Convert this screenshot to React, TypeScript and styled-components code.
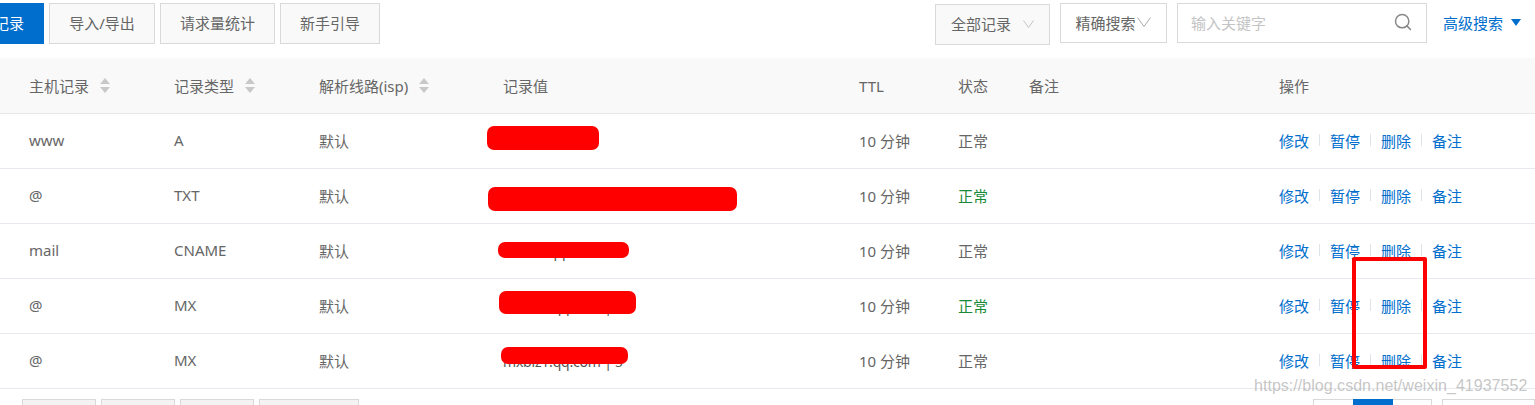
import React from "react";
import styled, { createGlobalStyle } from "styled-components";
import { Search } from "lucide-react";

const GlobalStyle = createGlobalStyle`
  html, body { margin: 0; padding: 0; background: #fff; overflow: hidden; }
  body {
    font-family: "Noto Sans", "Noto Sans CJK SC", sans-serif;
    font-size: 15px;
    color: #555;
  }
`;

const Page = styled.div`
  position: relative;
  width: 1535px;
  height: 405px;
  overflow: hidden;
`;

const Toolbar = styled.div`
  display: flex;
  align-items: flex-start;
  height: 58px;
  padding-top: 3px;
  box-sizing: border-box;
`;

const ToolButton = styled.button<{ $w: number; $primary?: boolean }>`
  width: ${(p) => p.$w}px;
  height: 41px;
  margin-right: 5px;
  padding: 0 0 3px;
  box-sizing: border-box;
  flex: none;
  border: 1px solid ${(p) => (p.$primary ? "#006ecc" : "#d9d9d9")};
  background: ${(p) => (p.$primary ? "#006ecc" : "#f9f9f9")};
  color: ${(p) => (p.$primary ? "#fff" : "#666")};
  font: inherit;
  white-space: nowrap;
`;

const PrimaryButton = styled(ToolButton)`
  margin-left: -37px;
  text-align: right;
  padding-right: 19px;
`;

const Spacer = styled.div`
  flex: 1;
`;

const FilterSelect = styled.div<{ $w: number; $fill?: boolean; $gap: number }>`
  display: flex;
  align-items: center;
  justify-content: center;
  gap: ${(p) => p.$gap}px;
  width: ${(p) => p.$w}px;
  height: ${(p) => (p.$fill ? 41 : 40)}px;
  margin-top: ${(p) => (p.$fill ? 1 : 0)}px;
  margin-right: 10px;
  padding-bottom: 2px;
  box-sizing: border-box;
  border: 1px solid #d9d9d9;
  background: ${(p) => (p.$fill ? "#f9f9f9" : "#fff")};
  color: #666;
`;

const Chevron = ({ w, h, color }: { w: number; h: number; color: string }) => (
  <svg width={w} height={h} viewBox={`0 0 ${w} ${h}`} fill="none">
    <path d={`M0.5 0.5 L${w / 2} ${h - 0.5} L${w - 0.5} 0.5`} stroke={color} strokeWidth="1" />
  </svg>
);

const SearchBox = styled.div`
  display: flex;
  align-items: center;
  justify-content: space-between;
  width: 250px;
  height: 40px;
  padding: 0 13px 2px 13px;
  box-sizing: border-box;
  border: 1px solid #d9d9d9;
  color: #c4c4c4;
  svg { color: #888; }
`;

const AdvancedLink = styled.a`
  display: flex;
  align-items: center;
  height: 40px;
  padding-bottom: 2px;
  box-sizing: border-box;
  margin-left: 16px;
  margin-right: 14px;
  color: #006ecc;
  white-space: nowrap;
`;

const Caret = styled.span`
  width: 0;
  height: 0;
  margin-left: 8px;
  border-left: 5.5px solid transparent;
  border-right: 5.5px solid transparent;
  border-top: 7px solid #006ecc;
`;

const columns = "145px 145px 184px 356px 99px 71px 250px 1fr";

const HeaderRow = styled.div`
  display: grid;
  grid-template-columns: ${columns};
  align-items: center;
  height: 56px;
  padding-left: 29px;
  box-sizing: border-box;
  background: #f9f9f9;
  border-bottom: 1px solid #e8e8e8;
  color: #666;
`;

const HeaderCell = styled.div`
  display: flex;
  align-items: center;
  gap: 11px;
  white-space: nowrap;
`;

const SortIcon = styled.span`
  display: inline-flex;
  flex-direction: column;
  gap: 3px;
  &::before, &::after {
    content: "";
    width: 0;
    height: 0;
    border-left: 5px solid transparent;
    border-right: 5px solid transparent;
  }
  &::before { border-bottom: 6px solid #c8c8c8; }
  &::after { border-top: 6px solid #c8c8c8; }
`;

const Row = styled.div`
  display: grid;
  grid-template-columns: ${columns};
  align-items: center;
  height: 55px;
  padding-left: 29px;
  padding-bottom: 2px;
  box-sizing: border-box;
  border-bottom: 1px solid #e6eaee;
  color: #666;
`;

const RecordValue = styled.div`
  font-size: 14px;
  letter-spacing: -0.2px;
  padding-top: 2px;
  color: #555;
`;

const Status = styled.div<{ $ok?: boolean }>`
  color: ${(p) => (p.$ok ? "#1a8a3a" : "#666")};
`;

const Actions = styled.div`
  display: flex;
  align-items: center;
  color: #006ecc;
`;

const ActionLink = styled.a`
  width: 30px;
  white-space: nowrap;
`;

const Divider = styled.span`
  width: 1px;
  height: 12px;
  margin: 0 10px;
  background: #dfe4ea;
`;

const Footer = styled.div`
  display: flex;
  align-items: flex-start;
  padding: 10px 0 0 22px;
  height: 20px;
`;

const FooterButton = styled.div<{ $w: number }>`
  width: ${(p) => p.$w}px;
  height: 20px;
  margin-right: 5px;
  box-sizing: border-box;
  border: 1px solid #d9d9d9;
  background: #f3f3f3;
`;

const Pager = styled.div`
  display: flex;
  height: 20px;
  width: 119px;
  margin-right: 10px;
  box-sizing: border-box;
  border: 1px solid #d9d9d9;
  justify-content: center;
`;

const PagerActive = styled.div`
  width: 40px;
  background: #006ecc;
  margin-top: -1px;
`;

const PagerNext = styled.div`
  width: 93px;
  height: 20px;
  box-sizing: border-box;
  border: 1px solid #d9d9d9;
  flex: none;
`;

const Redaction = styled.div<{ $x: number; $y: number; $w: number; $h: number }>`
  position: absolute;
  left: ${(p) => p.$x}px;
  top: ${(p) => p.$y}px;
  width: ${(p) => p.$w}px;
  height: ${(p) => p.$h}px;
  background: #ff0000;
  border-radius: 7px;
`;

const Highlight = styled.div`
  position: absolute;
  left: 1352px;
  top: 257px;
  width: 75px;
  height: 112px;
  box-sizing: border-box;
  border: 4px solid #ff0000;
  border-radius: 2px;
`;

const Watermark = styled.div`
  position: absolute;
  left: 1254px;
  top: 377px;
  font-family: "Liberation Sans", sans-serif;
  font-size: 16px;
  letter-spacing: 0.03px;
  color: rgba(150, 150, 150, 0.55);
  white-space: nowrap;
`;

const records = [
  { host: "www", type: "A", value: "", ok: false },
  { host: "@", type: "TXT", value: "", ok: true },
  { host: "mail", type: "CNAME", value: "exmail.qq.com", ok: false },
  { host: "@", type: "MX", value: "mxbiz2.qq.com | 5", ok: true },
  { host: "@", type: "MX", value: "mxbiz1.qq.com | 5", ok: false },
];

const redactions = [
  { x: 487, y: 126, w: 112, h: 24 },
  { x: 488, y: 187, w: 249, h: 24 },
  { x: 498, y: 242, w: 131, h: 16 },
  { x: 499, y: 291, w: 137, h: 23 },
  { x: 501, y: 347, w: 127, h: 17 },
];

export default function App() {
  return (
    <Page>
      <GlobalStyle />
      <Toolbar>
        <PrimaryButton $w={81} $primary>添加记录</PrimaryButton>
        <ToolButton $w={106}>导入/导出</ToolButton>
        <ToolButton $w={115}>请求量统计</ToolButton>
        <ToolButton $w={100}>新手引导</ToolButton>
        <Spacer />
        <FilterSelect $w={115} $fill $gap={12}>
          全部记录
          <Chevron w={11} h={8} color="#c4c4c4" />
        </FilterSelect>
        <FilterSelect $w={107} $gap={2}>
          精确搜索
          <Chevron w={14} h={10} color="#aaa" />
        </FilterSelect>
        <SearchBox>
          输入关键字
          <Search size={20} strokeWidth={1.8} />
        </SearchBox>
        <AdvancedLink>
          高级搜索
          <Caret />
        </AdvancedLink>
      </Toolbar>
      <HeaderRow>
        <HeaderCell>主机记录<SortIcon /></HeaderCell>
        <HeaderCell>记录类型<SortIcon /></HeaderCell>
        <HeaderCell>解析线路(isp)<SortIcon /></HeaderCell>
        <HeaderCell>记录值</HeaderCell>
        <HeaderCell>TTL</HeaderCell>
        <HeaderCell>状态</HeaderCell>
        <HeaderCell>备注</HeaderCell>
        <HeaderCell>操作</HeaderCell>
      </HeaderRow>
      {records.map((r, i) => (
        <Row key={i}>
          <div>{r.host}</div>
          <div>{r.type}</div>
          <div>默认</div>
          <RecordValue>{r.value}</RecordValue>
          <div>10 分钟</div>
          <Status $ok={r.ok}>正常</Status>
          <div />
          <Actions>
            <ActionLink>修改</ActionLink>
            <Divider />
            <ActionLink>暂停</ActionLink>
            <Divider />
            <ActionLink>删除</ActionLink>
            <Divider />
            <ActionLink>备注</ActionLink>
          </Actions>
        </Row>
      ))}
      <Footer>
        <FooterButton $w={74} />
        <FooterButton $w={74} />
        <FooterButton $w={74} />
        <FooterButton $w={100} />
        <Spacer />
        <Pager>
          <PagerActive />
        </Pager>
        <PagerNext />
      </Footer>
      {redactions.map((b, i) => (
        <Redaction key={i} $x={b.x} $y={b.y} $w={b.w} $h={b.h} />
      ))}
      <Highlight />
      <Watermark>https://blog.csdn.net/weixin_41937552</Watermark>
    </Page>
  );
}
